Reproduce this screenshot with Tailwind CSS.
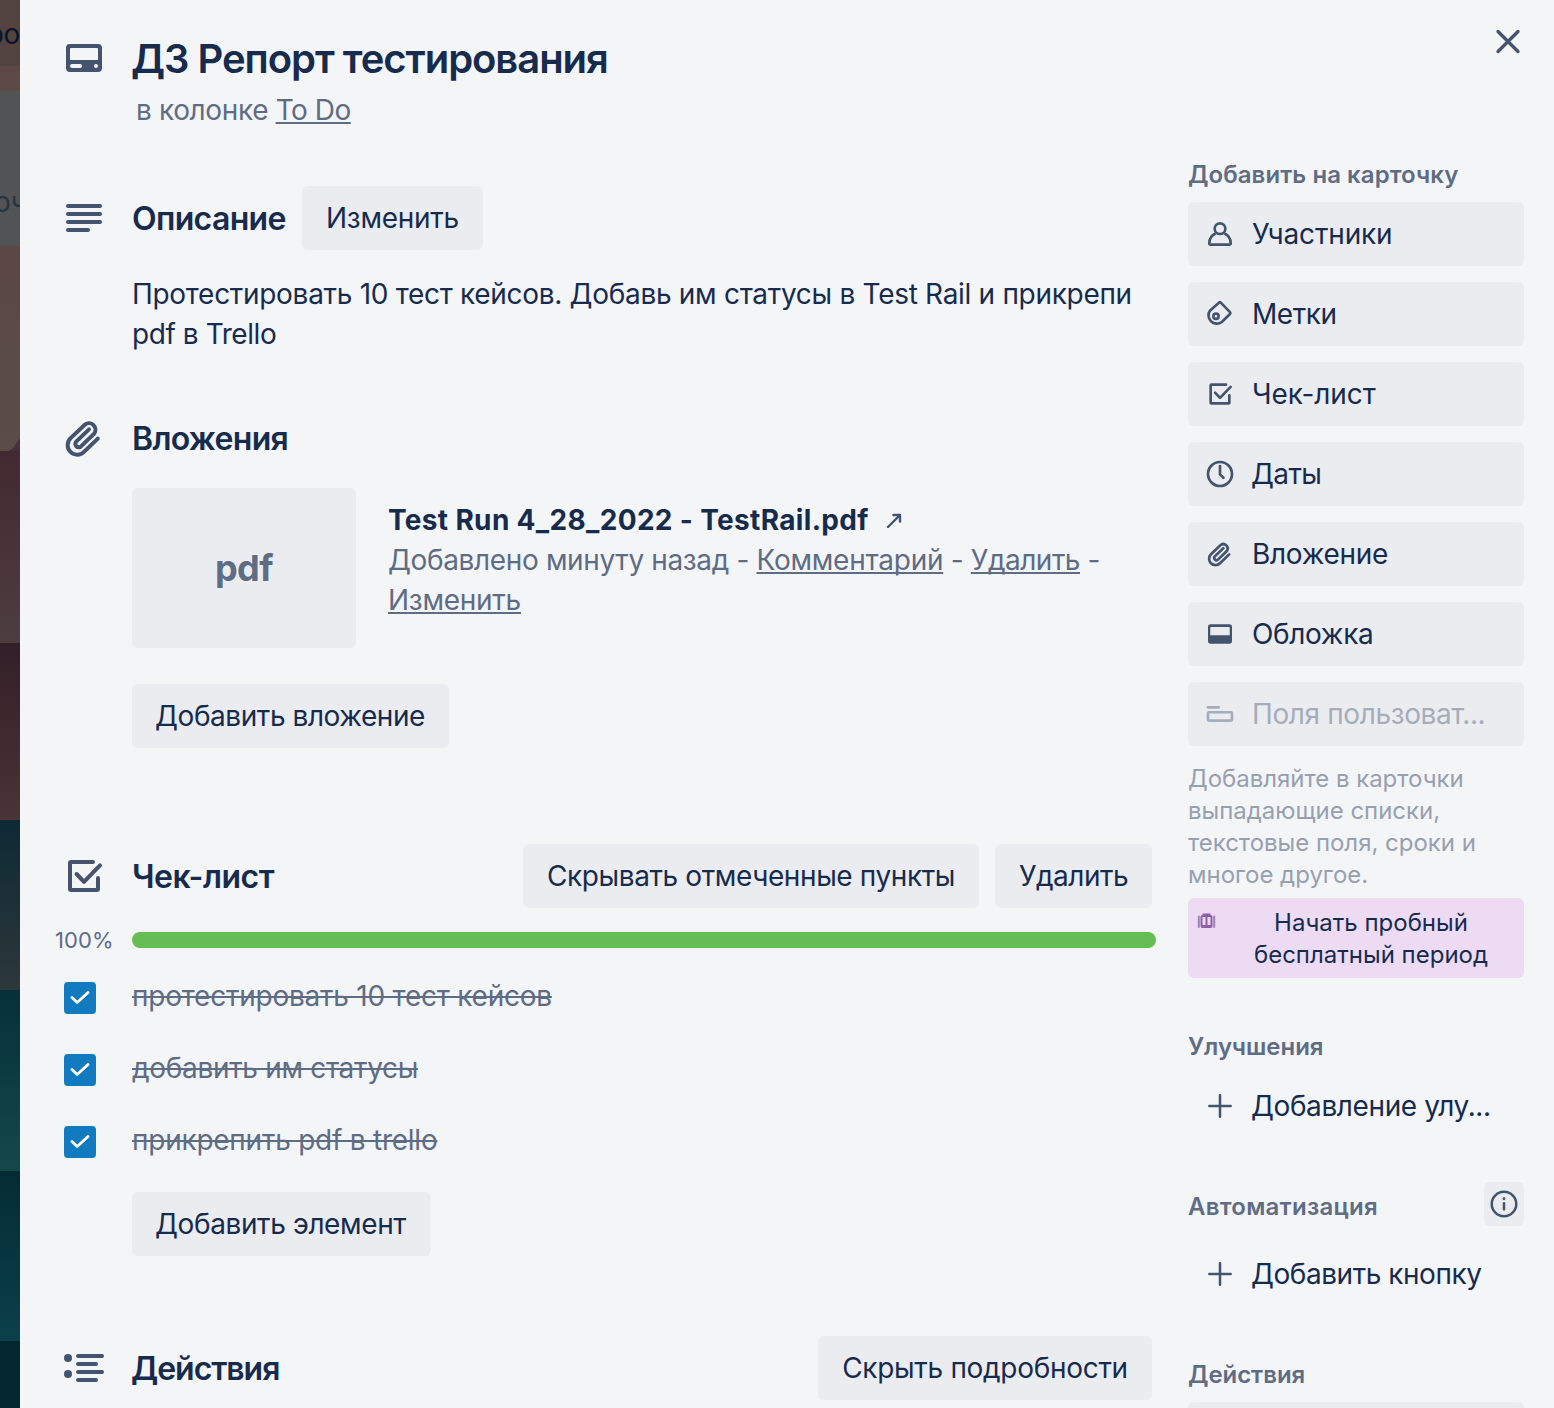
<!DOCTYPE html>
<html lang="ru">
<head>
<meta charset="utf-8">
<title>ДЗ Репорт тестирования</title>
<script src="https://cdn.jsdelivr.net/npm/@tailwindcss/browser@4"></script>
</head>
<body class="flex h-[1408px] w-[1554px] overflow-hidden bg-[#f4f5f7] font-['Inter',sans-serif] text-[28px] leading-[40px] tracking-[-0.3px] text-[#172b4d]">

<!-- Board behind the card window -->
<div class="flex w-5 shrink-0 flex-col overflow-hidden">
  <div class="flex h-[66px] shrink-0 justify-end bg-[#524240] pt-[14px] text-[#0b1528]"><span>ро</span></div>
  <div class="h-6 shrink-0 bg-[#5d4846]"></div>
  <div class="flex h-[156px] shrink-0 bg-[#525355] pt-[92px] text-[#2a3340]"><span class="ml-[-6px]">оч</span></div>
  <div class="h-[205px] shrink-0 bg-linear-to-b from-[#5a4746] to-[#5a4c48]">
    <svg class="mt-[190px] h-[15px] w-5" viewBox="0 0 20 15" fill="#46303a"><path d="M20 2L13 12Q11 14 8 15H20Z"/></svg>
  </div>
  <div class="h-[192px] shrink-0 bg-linear-to-b from-[#432a30] to-[#4d3d41]"></div>
  <div class="h-[177px] shrink-0 bg-linear-to-b from-[#331f27] to-[#493436]"></div>
  <div class="h-[170px] shrink-0 bg-linear-to-b from-[#0c2a35] to-[#2c373a]"></div>
  <div class="h-[181px] shrink-0 bg-linear-to-b from-[#06303a] to-[#15484b]"></div>
  <div class="h-[170px] shrink-0 bg-linear-to-b from-[#052c35] to-[#0b404a]"></div>
  <div class="h-[67px] shrink-0 bg-[#052830]"></div>
</div>

<div class="relative flex flex-1 gap-8 pl-8">
  <!-- Main column -->
  <main class="w-[1104px] shrink-0 pt-[34px]">
    <header class="flex h-12 gap-6 pl-2">
      <svg class="size-12 shrink-0" viewBox="0 0 24 24" fill="#44546f"><path fill-rule="evenodd" d="M5 5h14a2 2 0 0 1 2 2v10a2 2 0 0 1-2 2H5a2 2 0 0 1-2-2V7a2 2 0 0 1 2-2zm.5 2a.5.5 0 0 0-.5.5V13h14V7.500a.5.5 0 0 0-.5-.5zM6 15a1 1 0 0 0 0 2h4a1 1 0 0 0 0-2zm12 0a1 1 0 1 0 0 2 1 1 0 0 0 0-2z"/></svg>
      <h1 class="-ml-px pt-px text-[40px] leading-[48px] font-semibold tracking-[-1.04px]">ДЗ Репорт тестирования</h1>
    </header>
    <p class="mt-2 pl-[84px] tracking-[-0.36px] text-[#5e6c84]">в колонке <a class="underline decoration-2 underline-offset-2 [text-decoration-skip-ink:none] tracking-[-0.5px]">To Do</a></p>

    <section class="mt-14">
      <div class="flex items-center pl-2">
        <svg class="mr-6 size-12" viewBox="0 0 24 24" stroke="#44546f" stroke-width="2" stroke-linecap="round"><path d="M4 6h16M4 10h16M4 14h16M4 18h10"/></svg>
        <h2 class="w-[154px] pt-0.5 text-[32px] font-semibold tracking-[-0.65px] whitespace-nowrap">Описание</h2>
        <button class="ml-4 h-16 w-[181px] rounded-md bg-[#ebecf0] tracking-[-0.26px]">Изменить</button>
      </div>
      <p class="mt-6 pl-20 whitespace-nowrap">Протестировать 10 тест кейсов. Добавь им статусы в Test Rail и прикрепи<br><span class="tracking-[-0.43px]">pdf в Trello</span></p>
    </section>

    <section class="mt-[52px]">
      <div class="flex h-16 items-center gap-6 pl-2">
        <svg class="size-12" viewBox="0 0 24 24" fill="none" stroke="#44546f" stroke-width="2" stroke-linecap="round"><path d="M18.900 12.300L12.000 18.900A4.750 4.750 0 0 1 5.200 12.200L12.500 5.300A3.250 3.250 0 0 1 17.100 9.800L10.500 16.200A1.700 1.700 0 0 1 8.100 13.800L14.500 7.700"/></svg>
        <h2 class="pt-0.5 text-[32px] font-semibold tracking-[-0.7px]">Вложения</h2>
      </div>
      <div class="mt-[18px] ml-20 flex gap-8">
        <div class="flex h-40 w-56 shrink-0 items-center justify-center rounded-md bg-[#ebecf0] text-[36px] font-bold tracking-[-0.5px] text-[#5e6c84]">pdf</div>
        <div class="pt-3 whitespace-nowrap text-[#5e6c84]">
          <div class="flex items-center"><span class="font-bold tracking-[0.33px] text-[#172b4d]">Test Run 4_28_2022 - TestRail.pdf</span><svg class="ml-4 h-5 w-5" viewBox="0 0 20 20" fill="none" stroke="#44546f" stroke-width="2.400" stroke-linecap="round" stroke-linejoin="round"><path d="M3 17L14.500 5.500M8.500 5h6.500v6.500"/></svg></div>
          <div class="tracking-[-0.36px]">Добавлено минуту назад - <a class="underline decoration-2 underline-offset-2 [text-decoration-skip-ink:none] tracking-[-0.25px]">Комментарий</a> - <a class="underline decoration-2 underline-offset-2 [text-decoration-skip-ink:none] tracking-[-0.5px]">Удалить</a> -<br><a class="underline decoration-2 underline-offset-2 [text-decoration-skip-ink:none] tracking-[-0.26px]">Изменить</a></div>
        </div>
      </div>
      <button class="mt-9 ml-20 h-16 w-[317px] rounded-md bg-[#ebecf0] pr-[1px] tracking-[-0.44px]">Добавить вложение</button>
    </section>

    <section class="mt-24">
      <div class="flex items-center pr-1 pl-2">
        <svg class="mr-6 size-12" viewBox="0 0 24 24" fill="none" stroke="#44546f" stroke-width="2" stroke-linecap="round" stroke-linejoin="round"><path d="M16.500 5H5.500a.5.5 0 0 0-.5.5v13a.5.5 0 0 0 .5.5h13a.5.5 0 0 0 .5-.5V13M8.300 11l3.700 3.900L20 6.700"/></svg>
        <h2 class="flex-1 pt-0.5 text-[32px] font-semibold tracking-[-0.5px]">Чек-лист</h2>
        <button class="h-16 w-[456px] rounded-md bg-[#ebecf0] tracking-[-0.4px]">Скрывать отмеченные пункты</button>
        <button class="ml-4 h-16 w-[157px] rounded-md bg-[#ebecf0] tracking-[-0.5px]">Удалить</button>
      </div>
      <div class="mt-4 flex h-8 items-center">
        <span class="w-20 pl-[3px] text-[22px] tracking-[0.1px] text-[#5e6c84]">100%</span>
        <div class="h-4 flex-1 rounded-full bg-[#65bd54]"></div>
      </div>
      <ul class="mt-5 flex flex-col gap-8 pl-3 text-[#5e6c84]">
        <li class="flex h-10 gap-9"><span class="mt-1.5 h-8 w-8 rounded bg-[#127bbf]"><svg class="size-8" viewBox="0 0 32 32" fill="none" stroke="#fff" stroke-width="2.800" stroke-linecap="round" stroke-linejoin="round"><path d="M8 15.500l5.200 5L24 10.500"/></svg></span><span class="tracking-[-0.23px] line-through decoration-2">протестировать 10 тест кейсов</span></li>
        <li class="flex h-10 gap-9"><span class="mt-1.5 h-8 w-8 rounded bg-[#127bbf]"><svg class="size-8" viewBox="0 0 32 32" fill="none" stroke="#fff" stroke-width="2.800" stroke-linecap="round" stroke-linejoin="round"><path d="M8 15.500l5.200 5L24 10.500"/></svg></span><span class="tracking-[-0.32px] line-through decoration-2">добавить им статусы</span></li>
        <li class="flex h-10 gap-9"><span class="mt-1.5 h-8 w-8 rounded bg-[#127bbf]"><svg class="size-8" viewBox="0 0 32 32" fill="none" stroke="#fff" stroke-width="2.800" stroke-linecap="round" stroke-linejoin="round"><path d="M8 15.500l5.200 5L24 10.500"/></svg></span><span class="tracking-[-0.24px] line-through decoration-2">прикрепить pdf в trello</span></li>
      </ul>
      <button class="mt-8 ml-20 h-16 w-[299px] rounded-md bg-[#ebecf0] pr-[2px] tracking-[-0.38px]">Добавить элемент</button>
    </section>

    <section class="mt-20 flex items-center pr-1 pl-2">
      <svg class="mr-6 size-12" viewBox="0 0 24 24" fill="#44546f" stroke="#44546f" stroke-width="2" stroke-linecap="round"><path d="M9 6h12M9 10h9M9 14h12M9 18h9"/><circle cx="4" cy="7" r="2" stroke="none"/><circle cx="4" cy="15" r="2" stroke="none"/></svg>
      <h2 class="-ml-px flex-1 pt-0.5 text-[32px] font-semibold tracking-[-1.05px]">Действия</h2>
      <button class="h-16 w-[334px] rounded-md bg-[#ebecf0]">Скрыть подробности</button>
    </section>
  </main>

  <!-- Sidebar -->
  <aside class="w-[336px] shrink-0 pt-[159px]">
    <h3 class="text-[24px] leading-8 font-semibold tracking-[0.06px] text-[#5e6c84]">Добавить на карточку</h3>
    <nav class="mt-[11px] flex flex-col gap-4">
      <a class="flex h-16 items-center gap-4 rounded-md bg-[#ebecf0] pl-4 tracking-[-0.15px]"><svg class="size-8" viewBox="0 0 24 24" fill="none" stroke="#44546f" stroke-width="2" stroke-linejoin="round"><circle cx="12" cy="8" r="4"/><path d="M8.700 11.700C5.800 12.900 4 15.700 4 19a1 1 0 0 0 1 1h14a1 1 0 0 0 1-1c0-3.300-1.800-6.100-4.700-7.300"/></svg>Участники</a>
      <a class="flex h-16 items-center gap-4 rounded-md bg-[#ebecf0] pl-4 tracking-[-0.45px]"><svg class="size-8" viewBox="0 0 24 24" fill="none" stroke="#44546f" stroke-width="2"><path d="M4.600 9.300L11.200 3.500a1 1 0 0 1 1.400 0L19.500 10.600a1 1 0 0 1 0 1.400L13.400 18A6.250 6.250 0 0 1 4.600 9.300Z"/><circle cx="9" cy="13.700" r="2"/></svg>Метки</a>
      <a class="flex h-16 items-center gap-4 rounded-md bg-[#ebecf0] pl-4 tracking-[-0.1px]"><svg class="size-8" viewBox="0 0 24 24" fill="none" stroke="#44546f" stroke-width="2" stroke-linecap="round" stroke-linejoin="round"><path d="M16.500 5H5.500a.5.5 0 0 0-.5.5v13a.5.5 0 0 0 .5.5h13a.5.5 0 0 0 .5-.5V13M8.300 11l3.700 3.900L20 6.700"/></svg>Чек-лист</a>
      <a class="flex h-16 items-center gap-[15px] rounded-md bg-[#ebecf0] pl-4 tracking-[-0.6px]"><svg class="size-8" viewBox="0 0 24 24" fill="none" stroke="#44546f" stroke-width="2" stroke-linecap="round" stroke-linejoin="round"><circle cx="12" cy="12" r="9"/><path d="M12 6v6.300l2.600 2.500"/></svg>Даты</a>
      <a class="flex h-16 items-center gap-4 rounded-md bg-[#ebecf0] pl-4"><svg class="size-8" viewBox="0 0 24 24" fill="none" stroke="#44546f" stroke-width="2" stroke-linecap="round"><path d="M18.900 12.300L12.000 18.900A4.750 4.750 0 0 1 5.200 12.200L12.500 5.300A3.250 3.250 0 0 1 17.100 9.800L10.500 16.200A1.700 1.700 0 0 1 8.100 13.800L14.500 7.700"/></svg>Вложение</a>
      <a class="flex h-16 items-center gap-4 rounded-md bg-[#ebecf0] pl-4 tracking-[-0.36px]"><svg class="size-8" viewBox="0 0 24 24" fill="#44546f"><path fill-rule="evenodd" d="M5 4.700h14a2 2 0 0 1 2 2v10.600a2 2 0 0 1-2 2H5a2 2 0 0 1-2-2V6.700a2 2 0 0 1 2-2zM5.200 6.700a.5.5 0 0 0-.5.5v5.700h14.600V7.200a.5.5 0 0 0-.5-.5z"/></svg>Обложка</a>
      <a class="flex h-16 items-center gap-4 rounded-md bg-[#ebecf0] pl-4 tracking-[-0.38px] text-[#a5adba]"><svg class="size-8" viewBox="0 0 24 24" fill="none" stroke="#a5adba" stroke-width="2" stroke-linecap="round"><path d="M3 7h8"/><rect x="3" y="10.700" width="18" height="6.300" rx=".8"/></svg>Поля пользоват...</a>
    </nav>
    <p class="mt-[17px] text-[24px] leading-8 tracking-[-0.02px] text-[#97a0af]">Добавляйте в карточки<br>выпадающие списки,<br>текстовые поля, сроки и<br>многое другое.</p>
    <a class="mt-[7px] flex h-20 rounded-md bg-[#eddbf4] pt-[9px] pl-2 text-[24px] leading-8 tracking-[0px]">
      <svg class="mt-[5px] h-[18px] w-[22px]" viewBox="0 0 22 18" fill="none" stroke="#8d5fa7" stroke-width="2"><path d="M2.800 4.500v10.500M18.200 4.500v10.500" stroke="#a27fb9" stroke-linecap="round"/><rect x="5.500" y="4" width="10" height="11" rx="1"/><path d="M7.500 4V2.500h6V4M10.500 4v11M5 14h11"/></svg>
      <span class="flex-1 text-center">Начать пробный<br>бесплатный период</span>
    </a>

    <h3 class="mt-[53px] text-[24px] leading-8 font-semibold text-[#5e6c84] tracking-[-0.03px]">Улучшения</h3>
    <a class="mt-[11px] flex h-16 items-center gap-[15px] pl-4 tracking-[-0.4px]"><svg class="size-8" viewBox="0 0 24 24" stroke="#44546f" stroke-width="1.900" stroke-linecap="round"><path d="M4 12h16M12 4v16"/></svg>Добавление улу...</a>

    <div class="mt-11 flex h-11 items-center justify-between">
      <h3 class="mt-1.5 text-[24px] leading-8 font-semibold tracking-[0.25px] text-[#5e6c84]">Автоматизация</h3>
      <span class="flex h-11 w-10 items-center justify-center rounded-md bg-[#ebecf0]"><svg class="size-8" viewBox="0 0 24 24" fill="none" stroke="#44546f" stroke-width="1.900"><circle cx="12" cy="12" r="9.200"/><path d="M12 11.500v4.500" stroke-linecap="round"/><circle cx="12" cy="8" r="1.100" fill="#44546f" stroke="none"/></svg></span>
    </div>
    <a class="mt-4 flex h-16 items-center gap-[15px] pl-4 tracking-[-0.46px]"><svg class="size-8" viewBox="0 0 24 24" stroke="#44546f" stroke-width="1.900" stroke-linecap="round"><path d="M4 12h16M12 4v16"/></svg>Добавить кнопку</a>

    <h3 class="mt-[53px] text-[24px] leading-8 font-semibold tracking-[-0.05px] text-[#5e6c84]">Действия</h3>
    <div class="mt-[11px] h-16 rounded-md bg-[#ebecf0]"></div>
  </aside>

  <!-- Close button floats over the window corner -->
  <button class="absolute top-[18px] right-[22px]"><svg class="size-12" viewBox="0 0 48 48" stroke="#44546f" stroke-width="3.300" stroke-linecap="round"><path d="M14 13.500l20 20M34 13.500l-20 20"/></svg></button>
</div>
</body>
</html>
